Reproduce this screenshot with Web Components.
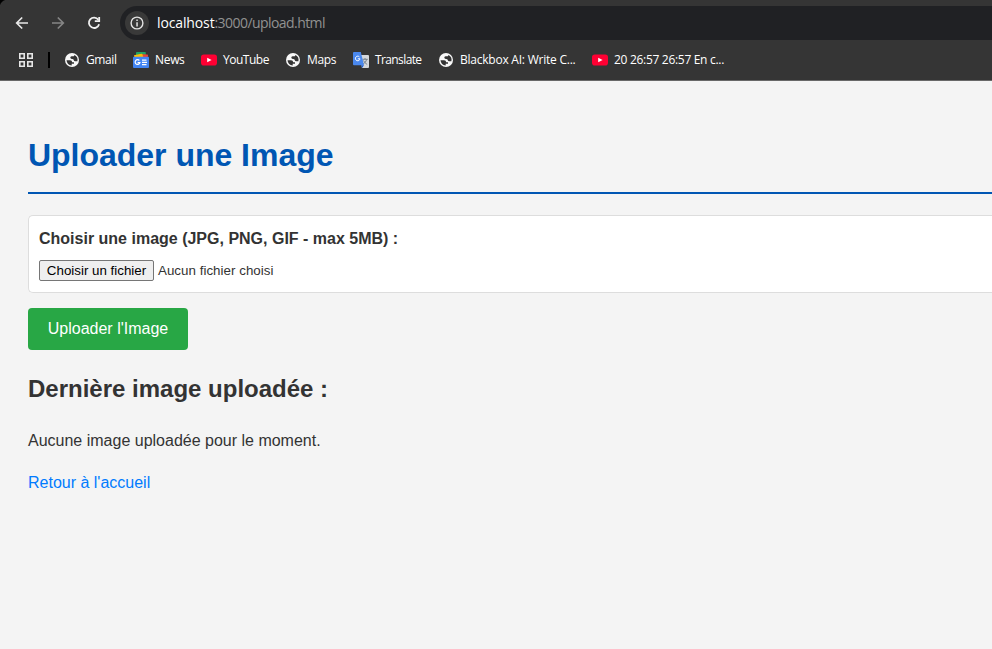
<!DOCTYPE html>
<html lang="fr">
<head>
<meta charset="utf-8">
<title>Uploader une Image</title>
<style>
html,body{margin:0;height:100%;overflow:hidden;background:#f4f4f4}
body{font-family:"Liberation Sans",Arial,sans-serif;color:#333}
</style>
</head>
<body>
<app-window></app-window>
<script>
const define = (name, html, ready) => customElements.define(name, class extends HTMLElement {
  connectedCallback() {
    if (this.shadowRoot) return;
    this.attachShadow({mode: 'open'}).innerHTML = html;
    if (ready) ready(this, this.shadowRoot);
  }
});

/* One-line text whose tracking is adjusted to fill the requested width. */
define('fit-text', `<style>
:host{display:block;white-space:nowrap;flex:none}
span{display:inline-block;white-space:pre}
</style><span><slot></slot></span>`, (el, root) => {
  const span = root.querySelector('span');
  const wanted = parseFloat(el.getAttribute('width'));
  el.style.width = wanted + 'px';
  const n = el.textContent.length;
  span.style.letterSpacing = ((wanted - span.getBoundingClientRect().width) / n) + 'px';
});

const icons = {
  back: `<svg width="14" height="14" viewBox="0 0 14 14" fill="none" stroke="#e8e8e8" stroke-width="1.7"><path d="M13 7H2M7.2 1.5 1.7 7l5.5 5.5"/></svg>`,
  forward: `<svg width="14" height="14" viewBox="0 0 14 14" fill="none" stroke="#858585" stroke-width="1.7"><path d="M1 7h11M6.8 1.5 12.3 7l-5.5 5.5"/></svg>`,
  reload: `<svg width="14" height="14" viewBox="0 0 14 14" fill="none" stroke="#f0f0f0" stroke-width="1.8"><path d="M11.3 3.7A5.2 5.2 0 1 0 12.1 8.2"/><path d="M12.2.9v4.3H7.8"/></svg>`,
  info: `<svg width="14" height="14" viewBox="0 0 14 14"><circle cx="7" cy="7" r="5.9" fill="none" stroke="#e3e3e3" stroke-width="1.4"/><path d="M6.3 3.5h1.5V5H6.3zM6.3 6.2h1.5v4.3H6.3z" fill="#e3e3e3"/></svg>`,
  apps: `<svg width="14" height="14" viewBox="0 0 14 14" fill="none" stroke="#e6e6e6" stroke-width="1.6"><path d="M.8.8h4.4v4.4H.8zM8.8.8h4.4v4.4H8.8zM.8 8.8h4.4v4.4H.8zM8.8 8.8h4.4v4.4H8.8z"/></svg>`,
  globe: `<svg width="16" height="16" viewBox="0 0 16 16"><circle cx="8" cy="8" r="7" fill="#f8f8f8"/><path d="M2.5 8.2H6Q8.2 8.3 8.2 10.2H10V11.7H7.7V13.4Q3 13 2.5 8.2ZM10.6 2.9 9.8 4.3H7.6Q6.2 4.5 6.3 5.8 6.5 7 8 6.9 9.6 6.8 9.8 8.3 10 9.2 11.2 9.2H13.4Q14.3 4.9 10.6 2.9Z" fill="#343434"/></svg>`,
  news: `<svg width="16" height="16" viewBox="0 0 16 16"><path d="M3 .8Q3 0 3.8 0H12q.8 0 .8.8V6H3z" fill="#21a464"/><path d="m6 2 8.3.6q.8.1.7.9L14.5 7H5z" fill="#ea4335"/><path d="m1 3.3 7.5-1.6q.8-.1 1 .7L10.8 7H1.6z" fill="#fbbc04"/><rect y="4.8" width="16" height="11.2" rx="1" fill="#4285f4"/><path d="M6.4 8.5A2.4 2.4 0 1 0 6.9 10.6H4.6M9 8.2h4.5M9 10.4h5M9 12.6h4.5" fill="none" stroke="#fff" stroke-width="1.2"/></svg>`,
  youtube: `<svg width="16" height="16" viewBox="0 0 16 16"><rect y="2.5" width="16" height="11" rx="2.8" fill="#ff0033"/><path d="m6.2 5.7 4.4 2.3-4.4 2.3z" fill="#fff"/></svg>`,
  translate: `<svg width="16" height="16" viewBox="0 0 16 16"><path d="M6 3h9q1 0 1 1v11q0 1-1 1H9z" fill="#d5d8dc"/><path d="M9.4 7.3h5.4M12 6v1.3M13.7 7.3q-.6 3.1-3.6 4.7M10.5 8.5q1 2.3 3.7 4" fill="none" stroke="#707a84" stroke-width=".9"/><path d="M8.2 13.2H11L9 16z" fill="#1a57c9"/><path d="M1 0h6.8L11 13.2H1q-1 0-1-1V1Q0 0 1 0z" fill="#4a88ee"/><path d="M6.4 4.9A2.3 2.3 0 1 0 7 6.8H4.8" fill="none" stroke="#fff" stroke-width="1"/></svg>`
};
define('ui-icon', `<style>:host{display:block;flex:none}svg{display:block}</style><div></div>`,
  (el, root) => root.querySelector('div').innerHTML = icons[el.getAttribute('name')]);

define('book-mark', `<style>
:host{display:flex;align-items:center;gap:6px;flex:none;color:#fff}
::slotted(fit-text){padding-bottom:2px}
</style><ui-icon></ui-icon><slot></slot>`, (el, root) => {
  const icon = document.createElement('ui-icon');
  icon.setAttribute('name', el.getAttribute('icon'));
  root.querySelector('ui-icon').replaceWith(icon);
});

define('browser-bar', `<style>
:host{display:block;box-sizing:border-box;height:81px;background:radial-gradient(circle at 8px 8px,#353535 8px,#000 9px) 0 0/8px 8px no-repeat,#353535;border-bottom:1px solid #686868;font-family:"Open Sans","Noto Sans",sans-serif;overflow:hidden}
.nav{display:flex;align-items:center;height:34px;padding:6px 0 0 15px}
.nav ui-icon+ui-icon{margin-left:22px}
.url{display:flex;align-items:center;flex:1;height:34px;margin-left:19px;border-radius:17px 0 0 17px;background:#202124;color:#fff;font-size:14px;padding-left:5px}
.url fit-text{padding-bottom:2px}
.info{width:24px;height:24px;border-radius:50%;background:#393939;display:grid;place-items:center;margin-right:8px}
.path{color:#919191}
.marks{display:flex;align-items:center;height:40px;padding-left:19px;font-size:12px}
.sep{width:2px;height:16px;background:#000;margin:0 14px 0 15px}
</style>
<div class="nav"><ui-icon name="back"></ui-icon><ui-icon name="forward"></ui-icon><ui-icon name="reload"></ui-icon>
<div class="url"><div class="info"><ui-icon name="info"></ui-icon></div><fit-text width="57.5">localhost</fit-text><fit-text class="path" width="110.5">:3000/upload.html</fit-text></div></div>
<div class="marks"><ui-icon name="apps"></ui-icon><div class="sep"></div>
<book-mark icon="globe" style="margin-right:16.5px"><fit-text width="30.5">Gmail</fit-text></book-mark>
<book-mark icon="news" style="margin-right:16.5px"><fit-text width="29.5">News</fit-text></book-mark>
<book-mark icon="youtube" style="margin-right:16px"><fit-text width="46">YouTube</fit-text></book-mark>
<book-mark icon="globe" style="margin-right:17px"><fit-text width="29">Maps</fit-text></book-mark>
<book-mark icon="translate" style="margin-right:16.5px"><fit-text width="46.5">Translate</fit-text></book-mark>
<book-mark icon="globe" style="margin-right:16.5px"><fit-text width="115.5">Blackbox AI: Write C...</fit-text></book-mark>
<book-mark icon="youtube"><fit-text width="110">20 26:57 26:57 En c...</fit-text></book-mark>
</div>`);

define('file-field', `<style>
:host{display:block;box-sizing:border-box;height:78px;padding:10px;background:#fff;border:1px solid #ddd;border-right:0;border-radius:5px 0 0 5px}
label{display:block;font-weight:bold;line-height:25px;height:34px}
.row{display:flex;align-items:center;gap:4px;font-size:13.333px}
button{box-sizing:border-box;width:115px;height:21px;padding:0;border:1px solid #767676;border-radius:2px;background:#efefef;color:#000;font:13.333px "Liberation Sans",Arial,sans-serif;white-space:nowrap}
</style><label><slot></slot></label><div class="row"><button>Choisir un fichier</button><fit-text width="115.5">Aucun fichier choisi</fit-text></div>`);

define('submit-button', `<style>
:host{display:block}
button{display:block;width:160px;height:42px;padding:0 0 1px;border:0;border-radius:4px;background:#28a745;color:#fff;font:16px "Liberation Sans",Arial,sans-serif}
</style><button><slot></slot></button>`);

define('upload-page', `<style>
:host{display:block;padding:48px 0 0 28px;line-height:1.6}
h1{margin:0 0 21px;padding-bottom:11px;height:52px;line-height:52px;font-size:32px;color:#0056b3;border-bottom:2px solid #0056b3}
submit-button{margin-top:15px}
h2{margin:20px 0 20px;font-size:24px;line-height:38px}
p{margin:0 0 16px;line-height:26px}
a{color:#007bff;text-decoration:none;display:block;line-height:26px}
</style>
<h1><fit-text width="305.5">Uploader une Image</fit-text></h1>
<file-field>Choisir une image (JPG, PNG, GIF - max 5MB) :</file-field>
<submit-button>Uploader l'Image</submit-button>
<h2>Dernière image uploadée :</h2>
<p>Aucune image uploadée pour le moment.</p>
<a href="#">Retour à l'accueil</a>`);

define('app-window', `<style>:host{display:block;height:100vh;overflow:hidden}</style><browser-bar></browser-bar><upload-page></upload-page>`);
</script>
</body>
</html>
